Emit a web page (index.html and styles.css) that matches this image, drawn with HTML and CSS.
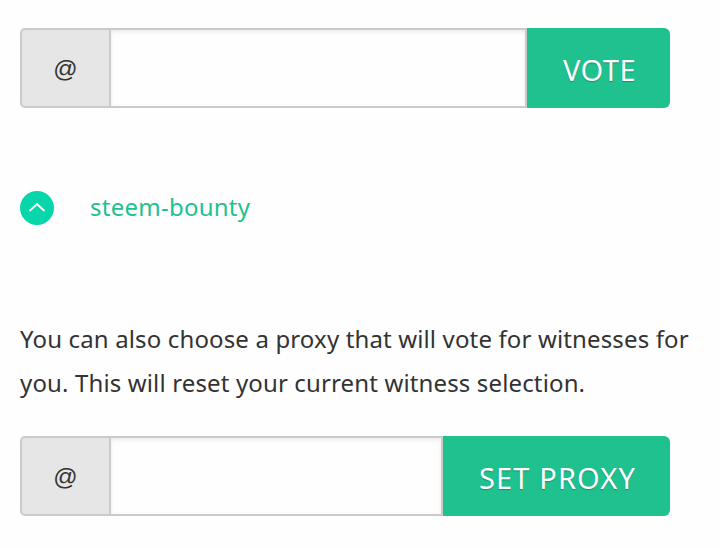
FILE: index.html
```html
<!DOCTYPE html>
<html lang="en">
<head>
<meta charset="utf-8">
<title>Witness vote</title>
<link rel="stylesheet" href="styles.css">
</head>
<body>
<main class="page">
  <form class="input-group">
    <span class="addon">@</span>
    <input class="field" type="text" aria-label="Witness">
    <button class="btn btn-vote" type="button">VOTE</button>
  </form>
  <div class="witness">
    <span class="vote-icon">
      <svg width="18" height="12" viewBox="0 0 18 12"><path d="M1.5 9 L9 2 L16.5 9" fill="none" stroke="#fff" stroke-width="2"/></svg>
    </span>
    <a class="witness-name" href="#">steem-bounty</a>
  </div>
  <p class="note">You can also choose a proxy that will vote for witnesses for you. This will reset your current witness selection.</p>
  <form class="input-group">
    <span class="addon">@</span>
    <input class="field" type="text" aria-label="Proxy">
    <button class="btn btn-proxy" type="button">SET PROXY</button>
  </form>
</main>
</body>
</html>
```
FILE: styles.css
```css
* { box-sizing: border-box; }
html, body { margin: 0; background: #fefefe; }
body { font-family: "Noto Sans", "Open Sans", sans-serif; color: #333; overflow: hidden; }
.page { width: 720px; height: 548px; padding: 28px 50px 0 20px; }
.input-group { display: flex; height: 80px; margin: 0; }
.addon {
  flex: 0 0 91px; display: flex; align-items: center; justify-content: center;
  background: #e6e6e6; border: 2px solid #cacaca;
  border-radius: 5px 0 0 5px; font-family: "Liberation Sans", sans-serif; font-size: 24px; color: #333;
  padding-top: 2px;
}
.field {
  flex: 1 1 0; min-width: 0; border: 2px solid #cacaca; border-left: 0;
  background: #fefefe; box-shadow: inset 0 2px 4px rgba(10,10,10,.08); outline: 0; padding: 0;
}
.btn {
  border: 0; background: #1fc18f; color: #fefefe; font: inherit; font-size: 29px;
  padding: 2px 34px 0 36px; border-radius: 0 6px 6px 0; text-shadow: 0 1px 1px rgba(0,0,0,.25);
}
.btn-vote { letter-spacing: .45px; }
.btn-proxy { letter-spacing: 1.15px; }
.witness { display: flex; align-items: center; margin-top: 83px; height: 34px; }
.vote-icon {
  width: 34px; height: 34px; border-radius: 50%; background: #06d6a9;
  display: flex; align-items: center; justify-content: center;
}
.witness-name { margin-left: 36px; color: #1fc18f; font-size: 24px; text-decoration: none; letter-spacing: .25px; line-height: 30px; padding-bottom: 2px; }
.note { margin: 92px 0 31px; font-size: 24px; line-height: 44px; letter-spacing: .14px; width: 680px; }
```
